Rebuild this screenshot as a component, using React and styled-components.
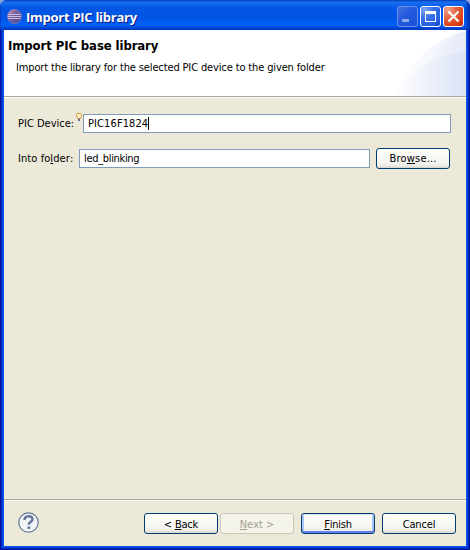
import React from "react";
import styled, { createGlobalStyle } from "styled-components";

const Global = createGlobalStyle`
  * { box-sizing: border-box; }
  body { margin: 0; background: #8fa6dc; overflow: hidden; }
`;

const Window = styled.main`
  width: 470px;
  height: 550px;
  display: flex;
  flex-direction: column;
  overflow: hidden;
  border-radius: 7px 7px 0 0;
  background: #0831d9;
  color: #000;
  font: 11px/14px "DejaVu Sans Condensed", "DejaVu Sans", sans-serif;
  font-kerning: none;
  white-space: pre;
`;

const TitleBar = styled.header`
  height: 30px;
  flex: none;
  display: flex;
  align-items: center;
  padding: 2px 6px 0 7px;
  background: linear-gradient(#0848c4 0, #1c74f2 2px, #1068f0 4px, #0556e4 8px, #0055e6 18px, #0060f5 24px, #005cf0 26px, #0046d8 28px, #003fca 30px);
  box-shadow: inset 1px 0 #0842cc, inset -3px 0 3px #0030ae;
`;

const WindowTitle = styled.h1`
  margin: 2px 0 0 4px;
  flex: 1;
  color: #fff;
  font: bold 13px/16px "Open Sans", "Noto Sans", sans-serif;
  letter-spacing: ${(p) => p.$spacing}px;
  text-shadow: 1px 1px #0a1883;
`;

const Captions = styled.div`
  display: flex;
  gap: 2px;
`;

const Caption = styled.button`
  width: 21px;
  height: 21px;
  padding: 0;
  border: 1px solid ${(p) => (p.$dim ? "#6b91ea" : "#fff")};
  border-radius: 3px;
  background: ${(p) =>
    p.$close
      ? "radial-gradient(circle at 20% 15%, #f0a28b 0, #e4603b 40%, #da4215 75%, #b92e0c 100%)"
      : p.$dim
        ? "linear-gradient(135deg, #4672e4, #225ade 45%, #1a51d5)"
        : "radial-gradient(circle at 20% 15%, #7ca4f5 0, #3c74eb 35%, #245fe0 75%, #1547c5 100%)"};
  svg { display: block; }
`;

const Client = styled.section`
  flex: 1;
  margin: 0 4px 4px;
  display: flex;
  flex-direction: column;
  background: #ece9d8;
  box-shadow: 0 0 0 1px #0855ea, 0 0 0 2px #0441df, 0 0 0 3px #0026c2, 0 0 0 4px #00139c;
  clip-path: inset(0 -4px -4px -4px);
`;

const Banner = styled.div`
  height: 66px;
  flex: none;
  display: flex;
  justify-content: space-between;
  background: #fff;
`;

const BannerText = styled.div`
  padding: 8px 0 0 4px;
`;

const Heading = styled.h2`
  margin: 0;
  font: bold 13px/16px "DejaVu Sans Condensed", "DejaVu Sans", sans-serif;
  letter-spacing: ${(p) => p.$spacing}px;
`;

const Description = styled.p`
  margin: 7px 0 0 8px;
  letter-spacing: ${(p) => p.$spacing}px;
`;

const Separator = styled.hr`
  width: 100%;
  height: 2px;
  flex: none;
  margin: 0;
  border: 0;
  border-top: 1px solid #aca899;
  background: #fff;
`;

const Form = styled.form`
  flex: 1;
  padding: 14px 15px 0 14px;
  display: flex;
  flex-direction: column;
  gap: 13px;
`;

const Row = styled.div`
  height: 22px;
  display: flex;
  align-items: center;
  padding-right: ${(p) => p.$inset || 0}px;
`;

const Label = styled.label`
  width: ${(p) => p.$width}px;
  flex: none;
  padding-top: 2px;
  letter-spacing: ${(p) => p.$spacing}px;
`;

const Hint = styled.svg`
  width: 6px;
  height: 9px;
  flex: none;
  align-self: flex-start;
  margin: 1px 1px 0 0;
`;

const Field = styled.div`
  flex: 1;
  height: 19px;
  display: flex;
  align-items: center;
  padding: 1px 0 0 4px;
  border: 1px solid #7f9db9;
  background: #fff;
  letter-spacing: ${(p) => p.$spacing}px;
`;

const Caret = styled.i`
  width: 1px;
  height: 13px;
  background: #000;
`;

const PushButton = styled.button`
  width: 74px;
  height: 21px;
  flex: none;
  padding: 2px 0 0;
  display: flex;
  align-items: center;
  justify-content: center;
  border: 1px solid ${(p) => (p.$disabled ? "#c9c7ba" : "#003c74")};
  border-radius: 3px;
  background: ${(p) => (p.$disabled ? "#f5f4ea" : "linear-gradient(#fff, #f5f5f1 70%, #ecebe5 88%, #d9d4ca)")};
  box-shadow: ${(p) => (p.$primary ? "inset 0 1px #cee7ff, inset 0 -2px #6982ee, inset 2px 0 #a9c3f3, inset -2px 0 #a9c3f3" : "none")};
  color: ${(p) => (p.$disabled ? "#a1a192" : "#000")};
  font: inherit;
  letter-spacing: ${(p) => p.$spacing}px;
  margin-left: ${(p) => p.$gap || 0}px;
`;

const Key = styled.span`
  text-decoration: underline;
  text-decoration-thickness: 1px;
  text-underline-offset: 1px;
  text-decoration-skip-ink: none;
`;

const Footer = styled.footer`
  height: 45px;
  flex: none;
  display: flex;
  align-items: center;
  padding: 0 10px 0 14px;
`;

const Help = styled.svg`
  width: 21px;
  height: 21px;
  margin: 0 auto 2px 0;
`;

function EclipseIcon() {
  return (
    <svg width="15" height="15" viewBox="0 0 15 15">
      <defs>
        <linearGradient id="globe" x2="1" y2="1">
          <stop stopColor="#d8a3b8" />
          <stop offset=".4" stopColor="#75609f" />
          <stop offset="1" stopColor="#45408c" />
        </linearGradient>
      </defs>
      <circle cx="7.5" cy="7.5" r="7" fill="url(#globe)" stroke="#a58bb8" strokeWidth=".6" />
      <path d="M1.5 5.5h12M1 7.5h13M1.5 9.5h12" stroke="#cbbedf" />
    </svg>
  );
}

function BannerArt() {
  return (
    <svg width="75" height="66" viewBox="0 0 75 66">
      <defs>
        <linearGradient id="back"><stop stopColor="#fff" /><stop offset=".4" stopColor="#f8f9fd" /><stop offset="1" stopColor="#ebeffa" /></linearGradient>
        <linearGradient id="middle"><stop stopColor="#f2f5fc" /><stop offset="1" stopColor="#e5eaf8" /></linearGradient>
        <linearGradient id="front"><stop stopColor="#fff" /><stop offset=".4" stopColor="#f0f3fb" /><stop offset="1" stopColor="#dce3f6" /></linearGradient>
      </defs>
      <path d="M2 66C15 42 37 9 75 1V66Z" fill="url(#back)" />
      <path d="M37 37C46 23 59 6 75 1V66H37Z" fill="url(#middle)" />
      <path d="M2 66C19 40 43 25 75 22V66Z" fill="url(#front)" />
    </svg>
  );
}

export default function App() {
  return (
    <>
      <Global />
      <Window>
        <TitleBar>
          <EclipseIcon />
          <WindowTitle $spacing={-0.27}>Import PIC library</WindowTitle>
          <Captions>
            <Caption $dim aria-label="Minimize">
              <svg width="19" height="19"><path d="M4 12h7v3H4z" fill="#8da9ed" /></svg>
            </Caption>
            <Caption aria-label="Maximize">
              <svg width="19" height="19"><path d="M4 4h11v11H4zM5 7v7h9V7z" fill="#fff" fillRule="evenodd" /></svg>
            </Caption>
            <Caption $close aria-label="Close">
              <svg width="19" height="19"><path d="M4.5 4.5l10 10m0-10l-10 10" stroke="#fff" strokeWidth="2.2" /></svg>
            </Caption>
          </Captions>
        </TitleBar>
        <Client>
          <Banner>
            <BannerText>
              <Heading $spacing={-0.1}>Import PIC base library</Heading>
              <Description $spacing={-0.135}>Import the library for the selected PIC device to the given folder</Description>
            </BannerText>
            <BannerArt />
          </Banner>
          <Separator />
          <Form>
            <Row>
              <Label $width={58} $spacing={0}>PIC Device:</Label>
              <Hint viewBox="0 0 6 9">
                <path d="M1.5 4.5L.5 3.5V1.5L1.5.5h3l1 1v2l-1 1v1h-3z" fill="#fff0c0" stroke="#d98a32" />
                <path d="M2 6h2v2H2z" fill="#4d6ea6" />
              </Hint>
              <Field $spacing={0.1}>PIC16F1824<Caret /></Field>
            </Row>
            <Row $inset={1}>
              <Label $width={61} $spacing={0.08}>Into fo<Key>l</Key>der:</Label>
              <Field $spacing={-0.33}>led_blinking</Field>
              <PushButton type="button" $gap={6} $spacing={0.15}><span>Bro<Key>w</Key>se...</span></PushButton>
            </Row>
          </Form>
          <Separator />
          <Footer>
            <Help viewBox="0 0 21 21">
              <circle cx="10.5" cy="10.5" r="9.7" fill="#f4f5f8" stroke="#65779a" strokeWidth="1.2" />
              <path d="M6.5 8C6.5 3 14.5 3 14.5 7.2C14.5 10 10.8 9.7 10.8 12.8" fill="none" stroke="#65779a" strokeWidth="2.5" />
              <path d="M9.5 14.5h2.7V17H9.5z" fill="#65779a" />
            </Help>
            <PushButton $spacing={-0.2}><span>&lt; <Key>B</Key>ack</span></PushButton>
            <PushButton $disabled $gap={2} $spacing={0}><span><Key>N</Key>ext &gt;</span></PushButton>
            <PushButton $primary $gap={7} $spacing={-0.25}><span><Key>F</Key>inish</span></PushButton>
            <PushButton $gap={7} $spacing={-0.15}><span>Cancel</span></PushButton>
          </Footer>
        </Client>
      </Window>
    </>
  );
}
